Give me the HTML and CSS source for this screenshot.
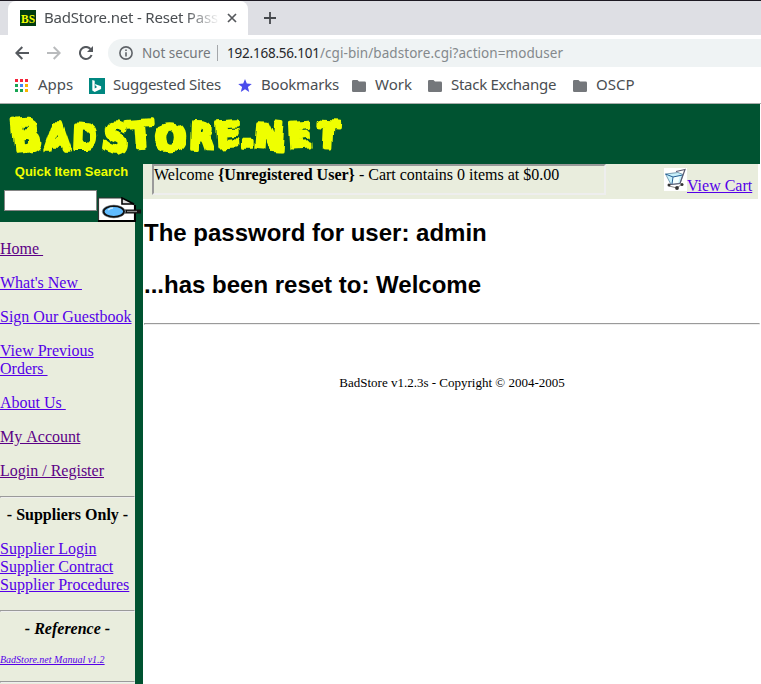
FILE: index.html
```html
<!DOCTYPE html>
<html lang="en">
<head>
<meta charset="utf-8">
<title>BadStore.net - Reset Password</title>
<link rel="stylesheet" href="styles.css">
</head>
<body>
<div class="chrome">
  <div class="tabstrip">
    <div class="tab">
      <svg class="favicon" width="16" height="16" viewBox="0 0 16 16"><rect width="16" height="16" fill="#003c10"/><text x="1" y="12.500" textLength="14" lengthAdjust="spacingAndGlyphs" class="favtext">BS</text></svg>
      <span class="tabtitle">BadStore.net - Reset Pass</span>
      <svg class="close" width="10" height="10" viewBox="0 0 10 10"><path d="M1 1l8 8M9 1l-8 8" stroke="#55585c" stroke-width="1.7"/></svg>
    </div>
    <svg class="newtab" width="12" height="12" viewBox="0 0 12 12"><path d="M6 0v12M0 6h12" stroke="#45484c" stroke-width="1.8"/></svg>
  </div>
  <div class="toolbar">
    <svg width="14" height="14" viewBox="0 0 14 14"><path d="M14 7H1.5M7.3 1L1.3 7l6 6" fill="none" stroke="#55595e" stroke-width="2"/></svg>
    <svg class="fwd" width="14" height="14" viewBox="0 0 14 14"><path d="M0 7h12.5M6.7 1l6 6-6 6" fill="none" stroke="#b9bbbd" stroke-width="2"/></svg>
    <svg class="reload" width="15" height="14" viewBox="0 0 15 14"><path d="M12.6 9A6 6 0 1 1 11.5 3" fill="none" stroke="#55595e" stroke-width="2"/><path d="M14 0v6H8z" fill="#55595e"/></svg>
    <div class="omnibox">
      <svg width="14" height="14" viewBox="0 0 14 14"><circle cx="7" cy="7" r="6.1" fill="none" stroke="#5f6368" stroke-width="1.6"/><path d="M6.2 3.4h1.6V5H6.2zM6.2 6.2h1.6v4.4H6.2z" fill="#5f6368"/></svg>
      <span class="notsecure">Not secure</span><i class="divider"></i><span class="host">192.168.56.101</span><span class="path">/cgi-bin/badstore.cgi?action=moduser</span>
    </div>
  </div>
  <div class="bookmarks">
    <span class="bm bm-apps"><svg width="13" height="13" viewBox="0 0 13 13"><path d="M0 0h3v3H0zM5 0h3v3H5zM10 0h3v3h-3z" fill="#f4243a"/><path d="M0 5h3v3H0zM0 10h3v3H0zM5 10h3v3H5z" fill="#18a553"/><path d="M5 5h3v3H5z" fill="#4285f4"/><path d="M10 5h3v3h-3zM10 10h3v3h-3z" fill="#fbb400"/></svg><span>Apps</span></span>
    <span class="bm bm-sites"><svg width="16" height="16" viewBox="0 0 16 16"><path d="M0 0h16v16H0z" fill="#008780"/><path d="M3.3 2l2.4.8v7.6l2.5-1.5-1.5-.8-.8-2 6.2 2.2v2.6L5.7 14l-2.4-1.5z" fill="#fff"/></svg><span>Suggested Sites</span></span>
    <span class="bm bm-star"><svg width="14" height="13" viewBox="0 0 14 13"><path d="M7 0l1.8 4.6 5 .4-3.9 3.1 1.3 4.9L7 10.3 2.8 13l1.3-4.9L.2 5l5-.4z" fill="#4a4cec"/></svg><span>Bookmarks</span></span>
    <span class="bm bm-work"><svg width="14" height="12" viewBox="0 0 14 12"><path d="M1.3 0h4.2L7 1.6h5.7Q14 1.6 14 3v7.700Q14 12 12.700 12H1.300Q0 12 0 10.700V1.300Q0 0 1.300 0z" fill="#74777b"/></svg><span>Work</span></span>
    <span class="bm bm-stack"><svg width="14" height="12" viewBox="0 0 14 12"><path d="M1.3 0h4.2L7 1.6h5.7Q14 1.6 14 3v7.700Q14 12 12.700 12H1.300Q0 12 0 10.700V1.300Q0 0 1.300 0z" fill="#74777b"/></svg><span>Stack Exchange</span></span>
    <span class="bm bm-oscp"><svg width="14" height="12" viewBox="0 0 14 12"><path d="M1.3 0h4.2L7 1.6h5.7Q14 1.6 14 3v7.700Q14 12 12.700 12H1.300Q0 12 0 10.700V1.300Q0 0 1.300 0z" fill="#74777b"/></svg><span>OSCP</span></span>
  </div>
</div>

<header class="banner">
  <svg class="logo" width="360" height="60" viewBox="0 0 360 60">
    <defs><filter id="drip" filterUnits="userSpaceOnUse" x="0" y="0" width="360" height="60"><feTurbulence type="fractalNoise" baseFrequency="0.14 0.03" numOctaves="1" seed="8"/><feDisplacementMap in="SourceGraphic" scale="9" xChannelSelector="R" yChannelSelector="G"/></filter></defs>
    <g class="letters" filter="url(#drip)">
      <text transform="translate(13 48) rotate(-5) scale(1.2 1.25)">B</text>
      <text transform="translate(44 46) scale(1.08 1.07)">A</text>
      <text transform="translate(72 45) rotate(2) scale(.98 1.05)">D</text>
      <text transform="translate(101 46) rotate(9) scale(1.12 1.15)">S</text>
      <text transform="translate(129 44) rotate(-4) scale(1.14 1.03)">T</text>
      <text transform="translate(154 46) scale(1.2 1.04)">O</text>
      <text transform="translate(190 44) rotate(2) scale(.94 1.03)">R</text>
      <text transform="translate(216 43) rotate(-3) scale(1.12 .98)">E</text>
      <text transform="translate(240 43) scale(1.3 1.1)">.</text>
      <text transform="translate(254 44) rotate(4) scale(1.14 1.03)">N</text>
      <text transform="translate(290 44) rotate(-3) scale(1.08 1)">E</text>
      <text transform="translate(316 44) rotate(3) scale(1.12 1.05)">T</text>
    </g>
  </svg>
</header>
<div class="page">
  <aside class="side">
    <div class="search">
      <div class="searchlabel">Quick Item Search</div>
      <div class="searchrow">
        <input class="query" type="text" aria-label="Search">
        <svg class="find" width="44" height="25" viewBox="0 0 44 25"><path d="M1.500 1h24l12 7v16h-36z" fill="#fff" stroke="#333" stroke-width="1.200"/><path d="M1 24h37V8" fill="none" stroke="#000" stroke-width="2"/><path d="M25 1v6h12z" fill="#ddd" stroke="#000" stroke-width="1.600"/><path d="M27 14.500h17" stroke="#111" stroke-width="4"/><path d="M30 14.500h10" stroke="#888" stroke-width="1.300"/><ellipse cx="16.800" cy="14.500" rx="11.500" ry="6.300" fill="#60bcff" stroke="#999" stroke-width="1"/><ellipse cx="16.800" cy="14.500" rx="10.200" ry="5.400" fill="#60bcff" stroke="#111" stroke-width="1.800"/><path d="M11 13q2-2 5-2" fill="none" stroke="#c4e9ff" stroke-width="1.500"/></svg>
      </div>
    </div>
    <nav class="menu">
      <p><a class="seen">Home&nbsp;</a></p>
      <p><a>What's New&nbsp;</a></p>
      <p><a>Sign Our Guestbook</a></p>
      <p><a>View Previous Orders&nbsp;</a></p>
      <p><a>About Us&nbsp;</a></p>
      <p><a class="seen">My&nbsp;Account</a></p>
      <p><a class="seen">Login / Register</a></p>
      <hr>
      <h4>- Suppliers Only -</h4>
      <p><a>Supplier Login</a><br><a>Supplier Contract</a><br><a>Supplier Procedures</a></p>
      <hr>
      <h4 class="ref">- Reference -</h4>
      <p class="manual"><a>BadStore.net Manual v1.2</a></p>
      <hr>
    </nav>
  </aside>
  <main class="content">
    <div class="status">
      <div class="welcome">Welcome <b>{Unregistered User}</b> - Cart contains 0 items at $0.00</div>
      <div class="cart"><svg width="23" height="23" viewBox="0 0 23 23"><path d="M0 0h23v23H0z" fill="#fff"/><path d="M1.500 6L14 4.500l5 2-3 9-9 1z" fill="#c8f0fa" stroke="#5d86a0" stroke-width=".8"/><path d="M8 9l8-1-2 7-6 1z" fill="#f3ffff"/><path d="M1.500 6L9 9l9.500-2M9 9l-1 7" fill="none" stroke="#235e94"/><path d="M12 3.500l9-2-5 14-10 1" fill="none" stroke="#5b5a70" stroke-width="1.200"/><path d="M5 18l8 2 5-4" fill="none" stroke="#888"/><circle cx="5" cy="17" r="1.500" fill="#333"/><circle cx="13" cy="20" r="1.900" fill="#333"/><circle cx="18" cy="16.500" r="1.500" fill="#333"/></svg><a>View Cart</a></div>
    </div>
    <h2>The password for user: admin</h2>
    <h2>...has been reset to: Welcome</h2>
    <hr>
    <p class="copyright">BadStore v1.2.3s - Copyright © 2004-2005</p>
  </main>
</div>
</body>
</html>
```
FILE: styles.css
```css
* { box-sizing: border-box; }
body { margin: 0; width: 761px; height: 684px; overflow: hidden; background: #fff; font: 16px/18px "Liberation Serif", serif; color: #000; }
svg { display: block; flex: none; }
.chrome { height: 104px; border-bottom: 1px solid #a9adab; font-family: "Noto Sans", sans-serif; color: #4a4e52; }
.tabstrip { height: 35px; background: #dedfe4; border-top: 1px solid #1d1922; display: flex; padding-left: 8px; }
.tab { width: 240px; height: 34px; background: #fff; border-radius: 8px 8px 0 0; display: flex; align-items: center; padding-left: 12px; }
.favtext { font: bold 13px "Liberation Serif", serif; fill: #f4ff00; }
.tabtitle { width: 176px; margin: -2px 0 0 8px; white-space: nowrap; font-size: 15px; line-height: 24px; letter-spacing: -.2px; -webkit-mask-image: linear-gradient(to right, #000 80%, transparent); mask-image: linear-gradient(to right, #000 80%, transparent); }
.close { margin-left: 7px; }
.newtab { margin: 11px 0 0 16px; }
.toolbar { height: 35px; display: flex; align-items: center; padding: 1px 0 0 15px; }
.fwd { margin-left: 18px; }
.reload { margin-left: 18px; }
.omnibox { flex: 1; height: 28px; margin-left: 14px; padding-left: 11px; background: #eff3f4; border-radius: 14px 0 0 14px; display: flex; align-items: center; font-size: 13.5px; white-space: nowrap; }
.notsecure { width: 68px; margin-left: 9px; color: #74787c; }
.divider { width: 1px; height: 16px; margin: 0 9px 0 7px; background: #a4a7aa; }
.host { width: 93px; color: #26282b; letter-spacing: -.22px; }
.path { color: #84898c; letter-spacing: .06px; }
.bookmarks { height: 33px; display: flex; padding: 0 0 2px 15px; }
.bm { display: flex; align-items: center; font-size: 15px; white-space: nowrap; }
.bm > span { margin-top: -3px; }
.bm-apps { width: 74px; gap: 10px; }
.bm-sites { width: 149px; gap: 8px; letter-spacing: -.26px; }
.bm-star { width: 114px; gap: 9px; letter-spacing: -.2px; }
.bm-work { width: 76px; gap: 9px; }
.bm-stack { width: 145px; gap: 9px; letter-spacing: -.28px; }
.bm-oscp { gap: 9px; }
.banner { width: 760px; height: 60px; background: #005331; }
.letters { font: bold 35px "DejaVu Sans Condensed", "DejaVu Sans", sans-serif; fill: #efff00; stroke: #efff00; stroke-width: 3.4; stroke-linejoin: round; }
.page { display: flex; width: 760px; height: 520px; }
.side { width: 143px; background: #005331; }
.search { height: 58px; }
.searchlabel { width: 143px; height: 26px; font: bold 13px/16px "Liberation Sans", sans-serif; text-align: center; color: #efff00; }
.searchrow { display: flex; padding-left: 4px; }
.query { width: 93px; height: 21px; padding: 0; border: 1px solid #858585; background: #fff; }
.find { margin-top: 7px; }
.menu { width: 135px; height: 462px; background: #e9eddd; overflow: hidden; padding-top: 18px; }
.menu p { margin: 0 0 16px; }
a { color: #5500e8; text-decoration: underline; }
a.seen { color: #5c0086; }
hr { border: 1px inset #eee; margin: 0; }
.menu h4 { margin: 8px 0 16px; font-size: 16px; text-align: center; }
.menu .ref { font-style: italic; }
.menu .manual { margin-bottom: 15px; font-size: 10px; line-height: 12px; font-style: italic; }
.content { width: 617px; }
.status { display: flex; width: 615px; height: 35px; padding-left: 9px; background: #e9eddd; }
.welcome { width: 454px; height: 31px; border: 2px inset #eee; }
.cart { display: flex; margin: 4px 0 0 58px; line-height: 35px; white-space: nowrap; }
h2 { margin: 20px 0 24px 1px; font: bold 24px/28px "Liberation Sans", sans-serif; }
.content hr { margin-left: 1px; }
.copyright { margin: 50px 0 0 1px; font-size: 13px; line-height: 16px; text-align: center; }
```
